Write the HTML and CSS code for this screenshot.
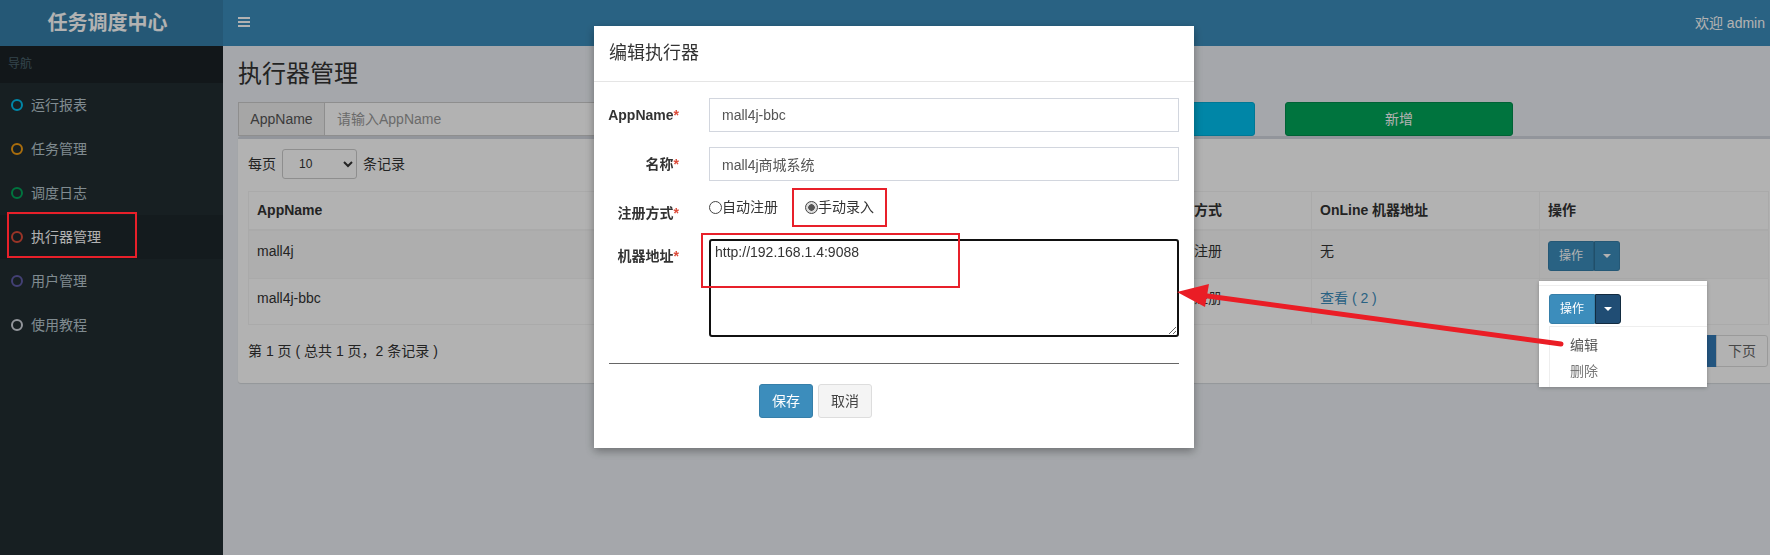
FILE: index.html
```html
<!DOCTYPE html>
<html lang="zh-CN">
<head>
    <meta charset="UTF-8">
    <title>执行器管理</title>
    <link rel="stylesheet" href="styles.css">
</head>
<body>

<header class="main-header">
    <div class="logo">任务调度中心</div>
    <nav class="navbar">
        <span class="sidebar-toggle">
            <svg width="12" height="10" viewBox="0 0 12 10"><rect y="0" width="12" height="2"/><rect y="4" width="12" height="2"/><rect y="8" width="12" height="2"/></svg>
        </span>
        <span class="user-name">欢迎 admin</span>
    </nav>
</header>

<div class="page">
    <aside class="sidebar">
        <div class="nav-header">导航</div>
        <a class="nav-item"><i class="circle aqua"></i>运行报表</a>
        <a class="nav-item"><i class="circle yellow"></i>任务管理</a>
        <a class="nav-item"><i class="circle green"></i>调度日志</a>
        <a class="nav-item active"><i class="circle red"></i>执行器管理</a>
        <a class="nav-item"><i class="circle purple"></i>用户管理</a>
        <a class="nav-item"><i class="circle gray"></i>使用教程</a>
    </aside>

    <main class="content-wrapper">
        <h1 class="page-title">执行器管理</h1>

        <div class="search-row">
            <div class="input-group">
                <span class="addon">AppName</span>
                <input type="text" placeholder="请输入AppName">
            </div>
            <button class="btn btn-info">搜索</button>
            <button class="btn btn-success">新增</button>
        </div>

        <div class="box">
            <div class="length-row">
                每页
                <select><option>10</option><option>25</option><option>50</option></select>
                条记录
            </div>

            <table class="data-table">
                <colgroup>
                    <col style="width:452px"><col style="width:457px"><col style="width:154px"><col style="width:228px"><col style="width:229px">
                </colgroup>
                <thead>
                    <tr><th>AppName</th><th>名称</th><th>注册方式</th><th>OnLine 机器地址</th><th>操作</th></tr>
                </thead>
                <tbody>
                    <tr class="odd">
                        <td>mall4j</td><td>mall4j商城系统</td><td>自动注册</td><td>无</td>
                        <td><span class="btn-group"><span class="btn-op">操作</span><span class="btn-caret"><i class="caret"></i></span></span></td>
                    </tr>
                    <tr>
                        <td>mall4j-bbc</td><td>mall4j商城系统</td><td>手动注册</td><td><a class="link">查看 ( 2 )</a></td>
                        <td></td>
                    </tr>
                </tbody>
            </table>

            <div class="table-footer">
                <span>第 1 页 ( 总共 1 页，2 条记录 )</span>
                <ul class="pagination">
                    <li>上页</li>
                    <li class="active">1</li>
                    <li>下页</li>
                </ul>
            </div>
        </div>
    </main>
</div>

<div class="backdrop"></div>

<div class="modal">
    <div class="modal-header">
        <h4>编辑执行器</h4>
    </div>
    <div class="modal-body">
        <form>
            <div class="form-group">
                <label>AppName<span class="req">*</span></label>
                <div class="control"><input type="text" value="mall4j-bbc"></div>
            </div>
            <div class="form-group">
                <label>名称<span class="req">*</span></label>
                <div class="control"><input type="text" value="mall4j商城系统"></div>
            </div>
            <div class="form-group">
                <label>注册方式<span class="req">*</span></label>
                <div class="control radios">
                    <label class="radio-inline"><input type="radio" name="addressType">自动注册</label>
                    <label class="radio-inline"><input type="radio" name="addressType" checked>手动录入</label>
                </div>
            </div>
            <div class="form-group">
                <label>机器地址<span class="req">*</span></label>
                <div class="control"><textarea rows="4">http://192.168.1.4:9088</textarea></div>
            </div>
            <hr>
            <div class="form-group">
                <div class="actions">
                    <button type="button" class="btn btn-primary">保存</button>
                    <button type="button" class="btn btn-default">取消</button>
                </div>
            </div>
        </form>
    </div>
</div>

<!-- dropdown of the second row, shown open -->
<div class="action-popup">
    <span class="btn-group"><span class="btn-op">操作</span><span class="btn-caret pressed"><i class="caret"></i></span></span>
    <ul class="dropdown-menu">
        <li>编辑</li>
        <li class="muted">删除</li>
    </ul>
</div>

<!-- red annotations -->
<div class="mark mark-menu"></div>
<div class="mark mark-radio"></div>
<div class="mark mark-address"></div>
<svg class="arrow" width="1770" height="555" viewBox="0 0 1770 555">
    <line x1="1561" y1="344" x2="1200" y2="295" stroke="#ea1d25" stroke-width="5" stroke-linecap="round"/>
    <polygon points="1177,292 1209,284 1205,307" fill="#ea1d25"/>
</svg>

</body>
</html>
```

FILE: styles.css
```css
* {
    box-sizing: border-box;
}

html, body {
    margin: 0;
}

body {
    width: 1770px;
    height: 555px;
    overflow: hidden;
    position: relative;
    font-family: "Liberation Sans", "Noto Sans CJK SC", sans-serif;
    font-size: 14px;
    line-height: 20px;
    color: #333;
    background-color: #ecf0f5;
}

/* header */
.main-header {
    display: flex;
    height: 46px;
}

.logo {
    width: 223px;
    padding-right: 8px;
    background-color: #367fa9;
    color: #fff;
    font-size: 20px;
    font-weight: bold;
    display: flex;
    align-items: center;
    justify-content: center;
}

.navbar {
    flex: 1;
    display: flex;
    align-items: center;
    justify-content: space-between;
    padding: 0 5px 0 15px;
    background-color: #3c8dbc;
    color: #fff;
}

.sidebar-toggle svg {
    display: block;
    fill: #fff;
    margin-top: -3px;
}

/* sidebar */
.page {
    display: flex;
    height: 509px;
}

.sidebar {
    width: 223px;
    flex-shrink: 0;
    background-color: #222d32;
}

.nav-header {
    height: 37px;
    line-height: 37px;
    padding-left: 8px;
    font-size: 12px;
    color: #4b646f;
    background-color: #1a2226;
}

.nav-item {
    height: 44px;
    display: flex;
    align-items: center;
    gap: 8px;
    padding-left: 11px;
    color: #b8c7ce;
}

.nav-item.active {
    background-color: #1e282c;
    color: #fff;
}

.circle {
    width: 12px;
    height: 12px;
    border: 2px solid;
    border-radius: 50%;
}

.circle.aqua { border-color: #00c0ef; }
.circle.yellow { border-color: #f39c12; }
.circle.green { border-color: #00a65a; }
.circle.red { border-color: #dd4b39; }
.circle.purple { border-color: #605ca8; }
.circle.gray { border-color: #d2d6de; }

/* content */
.content-wrapper {
    flex: 1;
    padding: 15px 0 0 15px;
}

.page-title {
    margin: 0 0 15px;
    font-size: 24px;
    line-height: 26px;
    font-weight: normal;
}

.search-row {
    display: flex;
    height: 34px;
}

.input-group {
    width: 759px;
    display: flex;
}

.input-group .addon {
    width: 87px;
    border: 1px solid #ccc;
    background-color: #eee;
    color: #555;
    text-align: center;
    line-height: 32px;
}

.input-group input {
    flex: 1;
    border: 1px solid #ccc;
    border-left: 0;
    padding: 6px 12px;
    font: inherit;
}

.input-group input::placeholder {
    color: #999;
}

.btn {
    font: inherit;
    border: 1px solid transparent;
    border-radius: 3px;
    padding: 6px 12px;
    color: #fff;
}

.search-row .btn {
    width: 228px;
    margin-left: 30px;
}

.btn-info {
    background-color: #00c0ef;
    border-color: #00acd6;
}

.btn-success {
    background-color: #00a65a;
    border-color: #008d4c;
}

.box {
    width: 1540px;
    height: 247px;
    padding: 10px;
    background-color: #fff;
    border-top: 3px solid #d2d6de;
    border-radius: 3px;
    box-shadow: 0 1px 1px rgba(0, 0, 0, 0.1);
}

.length-row {
    height: 30px;
    display: flex;
    align-items: center;
    gap: 6px;
}

.length-row select {
    width: 75px;
    height: 30px;
    padding: 0 6px 0 12px;
    font-size: 12px;
    border: 1px solid #ccc;
    border-radius: 3px;
    background-color: #fff;
    color: #333;
}

.data-table {
    width: 100%;
    margin-top: 12px;
    table-layout: fixed;
    border-collapse: collapse;
    border: 1px solid #f4f4f4;
}

.data-table th {
    height: 38px;
    padding: 0 8px;
    text-align: left;
    border: 1px solid #f4f4f4;
    border-bottom-width: 2px;
}

.data-table td {
    padding: 10px 8px 0;
    vertical-align: top;
    border: 1px solid #f4f4f4;
    white-space: nowrap;
}

.data-table tr.odd td {
    height: 49px;
    background-color: #f9f9f9;
}

.data-table tbody tr:last-child td {
    height: 46px;
    padding-top: 9px;
}

.link {
    color: #3c8dbc;
}

.btn-group {
    display: inline-flex;
    height: 30px;
    font-size: 12px;
    color: #fff;
}

.btn-op {
    padding: 0 10px;
    line-height: 28px;
    background-color: #3c8dbc;
    border: 1px solid #367fa9;
    border-radius: 3px 0 0 3px;
}

.btn-caret {
    width: 26px;
    display: flex;
    align-items: center;
    justify-content: center;
    background-color: #3c8dbc;
    border: 1px solid #367fa9;
    border-left-color: #2e7299;
    border-radius: 0 3px 3px 0;
}

.btn-caret.pressed {
    background-color: #204d74;
    border-color: #122b40;
}

.caret {
    width: 0;
    height: 0;
    border-top: 4px solid #fff;
    border-left: 4px solid transparent;
    border-right: 4px solid transparent;
}

.table-footer {
    margin-top: 10px;
    height: 32px;
    display: flex;
    align-items: center;
    justify-content: space-between;
}

.pagination {
    display: flex;
    margin: 0;
    padding: 0;
    list-style: none;
}

.pagination li {
    padding: 5px 11px;
    border: 1px solid #ddd;
    margin-left: -1px;
    color: #666;
}

.pagination li:first-child {
    border-radius: 3px 0 0 3px;
}

.pagination li:last-child {
    border-radius: 0 3px 3px 0;
}

.pagination li.active {
    background-color: #337ab7;
    border-color: #337ab7;
    color: #fff;
}

/* modal */
.backdrop {
    position: fixed;
    inset: 0;
    z-index: 10;
    background-color: rgba(0, 0, 0, 0.3);
}

.modal {
    position: fixed;
    left: 594px;
    top: 26px;
    z-index: 20;
    width: 600px;
    height: 422px;
    background-color: #fff;
    box-shadow: 0 3px 9px rgba(0, 0, 0, 0.35);
}

.modal-header {
    padding: 15px;
    border-bottom: 1px solid #e5e5e5;
}

.modal-header h4 {
    margin: 0;
    font-size: 18px;
    line-height: 25px;
    font-weight: normal;
    color: #333;
}

.modal-body {
    padding: 16px 15px 15px;
}

.modal-body form {
    margin: 0 -15px;
}

.form-group {
    display: grid;
    grid-template-columns: 100px 500px;
    margin-bottom: 15px;
}

.form-group > label {
    padding: 7px 15px 0 0;
    text-align: right;
    font-weight: bold;
}

.req {
    color: #dd4b39;
}

.control {
    padding: 0 15px;
}

.control input[type="text"] {
    width: 100%;
    height: 34px;
    padding: 6px 12px;
    font: inherit;
    color: #555;
    border: 1px solid #d2d6de;
}

.radios {
    height: 28px;
    padding-top: 1px;
}

.radio-inline {
    display: inline-flex;
    align-items: center;
    margin-right: 23px;
}

.radio-inline input {
    appearance: none;
    width: 13px;
    height: 13px;
    margin: 0;
    border: 1px solid #444;
    border-radius: 50%;
    background-color: #fff;
}

.radio-inline input:checked {
    background: radial-gradient(circle, #555 0 3px, #ddd 3.5px);
}

.control textarea {
    display: block;
    width: 100%;
    height: 98px;
    padding: 1px 4px;
    font: inherit;
    color: #333;
    border: 2px solid #111;
    border-radius: 3px;
    outline: none;
    resize: vertical;
}

.modal-body hr {
    margin: 26px 15px 20px;
    border: 0;
    border-top: 1px solid #666;
}

.actions {
    grid-column: 1 / 3;
    padding-left: 165px;
}

.btn-primary {
    background-color: #3c8dbc;
    border-color: #367fa9;
}

.btn-default {
    margin-left: 1px;
    background-color: #f4f4f4;
    border-color: #ddd;
    color: #444;
}

/* opened dropdown */
.action-popup {
    position: fixed;
    left: 1539px;
    top: 281px;
    z-index: 20;
    width: 168px;
    height: 106px;
    padding: 13px 0 0 10px;
    overflow: hidden;
    background-color: #fff;
    box-shadow: 0 1px 4px rgba(0, 0, 0, 0.25), inset 0 4px 0 #fff, inset 0 5px 0 #eee;
}

.dropdown-menu {
    width: 200px;
    margin: 2px 0 0;
    padding: 5px 0;
    list-style: none;
    border: 1px solid #eee;
    color: #555;
}

.dropdown-menu li {
    padding: 3px 20px;
}

.dropdown-menu li.muted {
    color: #777;
}

/* annotations */
.mark {
    position: fixed;
    z-index: 30;
    border: 2px solid #e8202a;
}

.mark-menu {
    left: 7px;
    top: 212px;
    width: 130px;
    height: 46px;
}

.mark-radio {
    left: 792px;
    top: 188px;
    width: 95px;
    height: 39px;
}

.mark-address {
    left: 701px;
    top: 233px;
    width: 259px;
    height: 55px;
}

.arrow {
    position: fixed;
    left: 0;
    top: 0;
    z-index: 40;
    pointer-events: none;
}
```
